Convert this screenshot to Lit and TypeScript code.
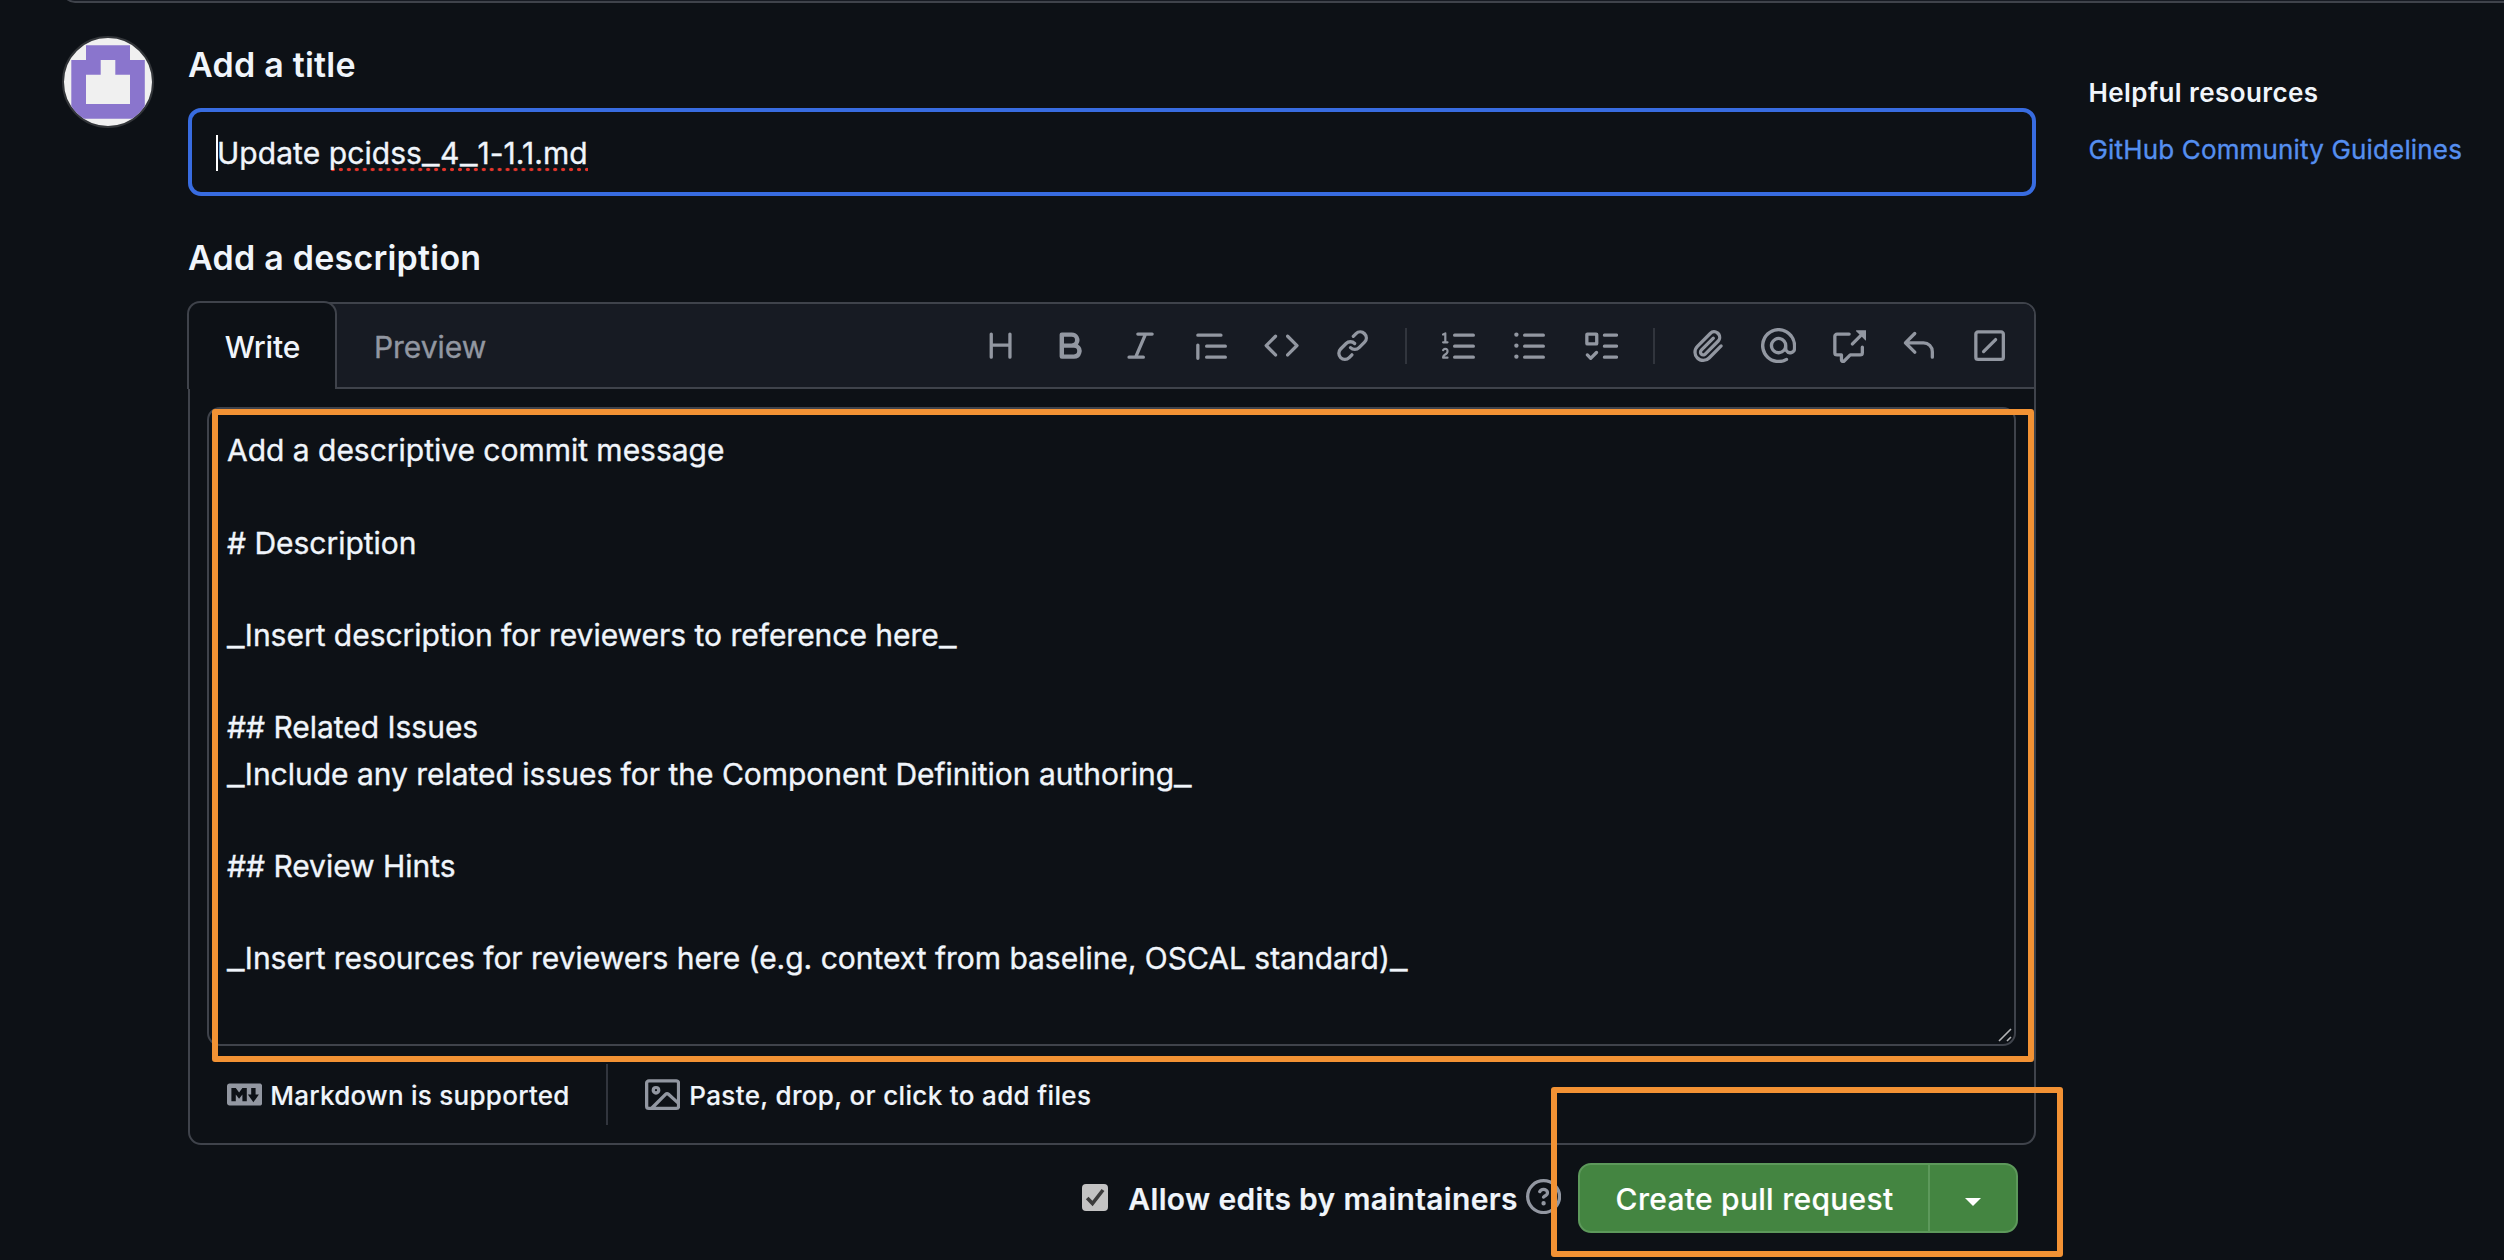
import { LitElement, html, css } from "lit";
import { customElement, property } from "lit/decorators.js";

const ICONS: Record<string, string> = {
  heading:
    "M3.75 2a.75.75 0 0 1 .75.75V7h7V2.75a.75.75 0 0 1 1.5 0v10.5a.75.75 0 0 1-1.5 0V8.5h-7v4.75a.75.75 0 0 1-1.5 0V2.75A.75.75 0 0 1 3.75 2Z",
  bold: "M4 2h4.5a3.501 3.501 0 0 1 2.852 5.53A3.499 3.499 0 0 1 9.5 14H4a1 1 0 0 1-1-1V3a1 1 0 0 1 1-1Zm1 7v3h4.5a1.5 1.5 0 0 0 0-3Zm3.5-2a1.5 1.5 0 0 0 0-3H5v3Z",
  italic:
    "M6 2.75A.75.75 0 0 1 6.75 2h6.5a.75.75 0 0 1 0 1.5h-2.505l-3.858 9H9.25a.75.75 0 0 1 0 1.5h-6.5a.75.75 0 0 1 0-1.5h2.505l3.858-9H6.75A.75.75 0 0 1 6 2.75Z",
  quote:
    "M1.75 2.5h10.5a.75.75 0 0 1 0 1.5H1.75a.75.75 0 0 1 0-1.5Zm4 5h8.5a.75.75 0 0 1 0 1.5h-8.5a.75.75 0 0 1 0-1.5Zm0 5h8.5a.75.75 0 0 1 0 1.5h-8.5a.75.75 0 0 1 0-1.5ZM2.5 7.75v6a.75.75 0 0 1-1.5 0v-6a.75.75 0 0 1 1.5 0Z",
  code: "m11.28 3.22 4.25 4.25a.75.75 0 0 1 0 1.06l-4.25 4.25a.749.749 0 0 1-1.275-.326.749.749 0 0 1 .215-.734L13.94 8l-3.72-3.72a.749.749 0 0 1 .326-1.275.749.749 0 0 1 .734.215Zm-6.56 0a.751.751 0 0 1 1.042.018.751.751 0 0 1 .018 1.042L2.06 8l3.72 3.72a.749.749 0 0 1-.326 1.275.749.749 0 0 1-.734-.215L.47 8.53a.75.75 0 0 1 0-1.06Z",
  link: "m7.775 3.275 1.25-1.25a3.5 3.5 0 1 1 4.95 4.95l-2.5 2.5a3.5 3.5 0 0 1-4.95 0 .751.751 0 0 1 .018-1.042.751.751 0 0 1 1.042-.018 1.998 1.998 0 0 0 2.83 0l2.5-2.5a2.002 2.002 0 0 0-2.83-2.83l-1.25 1.25a.751.751 0 0 1-1.042-.018.751.751 0 0 1-.018-1.042Zm-4.69 9.64a1.998 1.998 0 0 0 2.83 0l1.25-1.25a.751.751 0 0 1 1.042.018.751.751 0 0 1 .018 1.042l-1.25 1.25a3.5 3.5 0 1 1-4.95-4.95l2.5-2.5a3.5 3.5 0 0 1 4.95 0 .751.751 0 0 1-.018 1.042.751.751 0 0 1-1.042.018 1.998 1.998 0 0 0-2.83 0l-2.5 2.5a1.998 1.998 0 0 0 0 2.83Z",
  ordered:
    "M5 3.25a.75.75 0 0 1 .75-.75h8.5a.75.75 0 0 1 0 1.5h-8.5A.75.75 0 0 1 5 3.25Zm0 5a.75.75 0 0 1 .75-.75h8.5a.75.75 0 0 1 0 1.5h-8.5A.75.75 0 0 1 5 8.25Zm0 5a.75.75 0 0 1 .75-.75h8.5a.75.75 0 0 1 0 1.5h-8.5a.75.75 0 0 1-.75-.75ZM.924 10.32a.5.5 0 0 1-.851-.525l.001-.001.001-.002.002-.004.007-.011c.097-.144.215-.273.348-.384.228-.19.588-.392 1.068-.392.468 0 .858.181 1.126.484.259.294.377.673.377 1.038 0 .987-.686 1.495-1.156 1.845l-.047.035c-.303.225-.522.4-.654.597h1.357a.5.5 0 0 1 0 1H.5a.5.5 0 0 1-.5-.5c0-1.005.692-1.52 1.167-1.875l.035-.025c.531-.396.8-.625.8-1.078a.57.57 0 0 0-.128-.376C1.806 10.068 1.695 10 1.5 10a.658.658 0 0 0-.429.163.835.835 0 0 0-.144.153ZM2.003 2.5V6h.503a.5.5 0 0 1 0 1H.5a.5.5 0 0 1 0-1h.503V3.308l-.28.14a.5.5 0 0 1-.446-.895l1.003-.5a.5.5 0 0 1 .723.447Z",
  bullets:
    "M5.75 2.5h8.5a.75.75 0 0 1 0 1.5h-8.5a.75.75 0 0 1 0-1.5Zm0 5h8.5a.75.75 0 0 1 0 1.5h-8.5a.75.75 0 0 1 0-1.5Zm0 5h8.5a.75.75 0 0 1 0 1.5h-8.5a.75.75 0 0 1 0-1.5ZM2 14a1 1 0 1 1 0-2 1 1 0 0 1 0 2Zm1-6a1 1 0 1 1-2 0 1 1 0 0 1 2 0ZM2 4a1 1 0 1 1 0-2 1 1 0 0 1 0 2Z",
  tasks:
    "M2 2h4a1 1 0 0 1 1 1v4a1 1 0 0 1-1 1H2a1 1 0 0 1-1-1V3a1 1 0 0 1 1-1Zm4.655 8.595a.75.75 0 0 1 0 1.06L4.03 14.28a.75.75 0 0 1-1.06 0l-1.5-1.5a.749.749 0 0 1 .326-1.275.749.749 0 0 1 .734.215l.97.97 2.095-2.095a.75.75 0 0 1 1.06 0ZM9.75 2.5h5.5a.75.75 0 0 1 0 1.5h-5.5a.75.75 0 0 1 0-1.5Zm0 5h5.5a.75.75 0 0 1 0 1.5h-5.5a.75.75 0 0 1 0-1.5Zm0 5h5.5a.75.75 0 0 1 0 1.5h-5.5a.75.75 0 0 1 0-1.5Zm-7.25-9v3h3v-3Z",
  paperclip:
    "M12.212 3.02a1.753 1.753 0 0 0-2.478.003l-5.83 5.83a3.007 3.007 0 0 0-.88 2.127c0 .795.315 1.551.88 2.116.567.567 1.333.89 2.126.89.79 0 1.548-.321 2.116-.89l5.48-5.48a.75.75 0 0 1 1.061 1.06l-5.48 5.48a4.492 4.492 0 0 1-3.177 1.33c-1.2 0-2.345-.487-3.187-1.33a4.483 4.483 0 0 1-1.32-3.177c0-1.195.475-2.341 1.32-3.186l5.83-5.83a3.25 3.25 0 0 1 5.553 2.297c0 .863-.343 1.691-.953 2.301L7.439 12.39c-.375.377-.884.59-1.416.593a1.998 1.998 0 0 1-1.412-.593 1.992 1.992 0 0 1 0-2.828l5.48-5.48a.751.751 0 0 1 1.042.018.751.751 0 0 1 .018 1.042l-5.48 5.48a.492.492 0 0 0 0 .707.499.499 0 0 0 .352.154.51.51 0 0 0 .356-.154l5.833-5.827a1.755 1.755 0 0 0 0-2.481Z",
  mention:
    "M4.75 2.37a6.501 6.501 0 0 0 6.5 11.26.75.75 0 0 1 .75 1.298A7.999 7.999 0 0 1 .989 4.148 8 8 0 0 1 16 7.75v1.5a2.75 2.75 0 0 1-5.072 1.475 3.999 3.999 0 0 1-6.65-4.19A4 4 0 0 1 12 8v1.25a1.25 1.25 0 0 0 2.5 0V7.867a6.5 6.5 0 0 0-9.75-5.496ZM10.5 8a2.5 2.5 0 1 0-5 0 2.5 2.5 0 0 0 5 0Z",
  reference:
    "M2.75 3.5a.25.25 0 0 0-.25.25v7.5c0 .138.112.25.25.25h2a.75.75 0 0 1 .75.75v2.19l2.72-2.72a.749.749 0 0 1 .53-.22h4.5a.25.25 0 0 0 .25-.25v-2.5a.75.75 0 0 1 1.5 0v2.5A1.75 1.75 0 0 1 13.25 13H9.06l-2.573 2.573A1.458 1.458 0 0 1 4 14.543V13H2.75A1.75 1.75 0 0 1 1 11.25v-7.5C1 2.784 1.784 2 2.75 2h5.5a.75.75 0 0 1 0 1.5ZM16 1.25v4.146a.25.25 0 0 1-.427.177L14.03 4.03l-3.75 3.75a.749.749 0 0 1-1.275-.326.749.749 0 0 1 .215-.734l3.75-3.75-1.543-1.543A.25.25 0 0 1 11.604 1h4.146a.25.25 0 0 1 .25.25Z",
  reply:
    "M6.78 1.97a.75.75 0 0 1 0 1.06L3.81 6h6.44A4.75 4.75 0 0 1 15 10.75v2.5a.75.75 0 0 1-1.5 0v-2.5a3.25 3.25 0 0 0-3.25-3.25H3.81l2.97 2.97a.749.749 0 0 1-.326 1.275.749.749 0 0 1-.734-.215L1.47 7.28a.75.75 0 0 1 0-1.06l4.25-4.25a.75.75 0 0 1 1.06 0Z",
  slash:
    "M13.25 1c.966 0 1.75.784 1.75 1.75v10.5A1.75 1.75 0 0 1 13.25 15H2.75A1.75 1.75 0 0 1 1 13.25V2.75C1 1.784 1.784 1 2.75 1ZM2.75 2.5a.25.25 0 0 0-.25.25v10.5c0 .138.112.25.25.25h10.5a.25.25 0 0 0 .25-.25V2.75a.25.25 0 0 0-.25-.25Zm8.53 3.28-5.5 5.5a.75.75 0 0 1-1.06-1.06l5.5-5.5a.75.75 0 0 1 1.06 1.06Z",
  markdown:
    "M14.85 3c.63 0 1.15.52 1.14 1.15v7.7c0 .63-.51 1.15-1.15 1.15H1.15C.52 13 0 12.48 0 11.84V4.15C0 3.52.52 3 1.15 3ZM9 11V5H7L5.5 7 4 5H2v6h2V8l1.5 1.92L7 8v3Zm2.99.5L14.5 8H13V5h-2v3H9.5Z",
  image:
    "M16 13.25A1.75 1.75 0 0 1 14.25 15H1.75A1.75 1.75 0 0 1 0 13.25V2.75C0 1.784.784 1 1.75 1h12.5c.966 0 1.75.784 1.75 1.75ZM1.75 2.5a.25.25 0 0 0-.25.25v10.5c0 .138.112.25.25.25h.94l.03-.03 6.077-6.078a1.75 1.75 0 0 1 2.412-.06L14.5 10.31V2.75a.25.25 0 0 0-.25-.25Zm12.5 11a.25.25 0 0 0 .25-.25v-.917l-4.298-3.889a.25.25 0 0 0-.344.009L4.81 13.5ZM7 6a2 2 0 1 1-3.999.001A2 2 0 0 1 7 6ZM5.5 6a.5.5 0 1 0-1 0 .5.5 0 0 0 1 0Z",
  question:
    "M0 8a8 8 0 1 1 16 0A8 8 0 0 1 0 8Zm8-6.5a6.5 6.5 0 1 0 0 13 6.5 6.5 0 0 0 0-13ZM6.92 6.085h.001a.749.749 0 1 1-1.342-.67c.169-.339.436-.701.849-.977C6.845 4.16 7.369 4 8 4a2.756 2.756 0 0 1 1.637.525c.503.377.863.965.863 1.725 0 .448-.115.83-.329 1.15-.205.307-.47.513-.692.662-.109.072-.22.138-.313.195l-.006.004a6.24 6.24 0 0 0-.26.16.952.952 0 0 0-.276.245.75.75 0 0 1-1.248-.832c.184-.264.42-.489.692-.661.103-.067.207-.132.313-.195l.007-.004c.1-.061.182-.11.258-.161a.969.969 0 0 0 .277-.245C8.96 6.514 9 6.427 9 6.25a.612.612 0 0 0-.262-.525A1.27 1.27 0 0 0 8 5.5c-.369 0-.595.09-.74.187a1.01 1.01 0 0 0-.34.398ZM9 11a1 1 0 1 1-2 0 1 1 0 0 1 2 0Z",
};

@customElement("line-icon")
export class LineIcon extends LitElement {
  @property() name = "";

  static styles = css`
    :host {
      display: block;
      flex: none;
      width: 35.2px;
      height: 35.2px;
    }
    .glyph {
      display: block;
      width: 100%;
      height: 100%;
      fill: currentColor;
    }
  `;

  render() {
    return html`<svg class="glyph" viewBox="0 0 16 16"><path fill-rule="evenodd" d=${ICONS[this.name] ?? ""}></path></svg>`;
  }
}

const TOOLBAR: string[][] = [
  ["heading", "bold", "italic", "quote", "code", "link"],
  ["ordered", "bullets", "tasks"],
  ["paperclip", "mention", "reference", "reply", "slash"],
];

const MESSAGE = [
  "Add a descriptive commit message",
  "",
  "# Description",
  "",
  "_Insert description for reviewers to reference here_",
  "",
  "## Related Issues",
  "_Include any related issues for the Component Definition authoring_",
  "",
  "## Review Hints",
  "",
  "_Insert resources for reviewers here (e.g. context from baseline, OSCAL standard)_",
];

@customElement("app-root")
export class AppRoot extends LitElement {
  static styles = css`
    :host {
      --bg: #0d1116;
      --line: #3f434b;
      --fg: #f0f5fb;
      --muted: #9297a1;
      --mark: #f29234;
      display: block;
      position: relative;
      box-sizing: border-box;
      width: 2504px;
      height: 1260px;
      overflow: hidden;
      background: var(--bg);
      color: var(--fg);
      font-family: Inter, "Liberation Sans", sans-serif;
      font-size: 30px;
      -webkit-text-stroke: 0.35px currentColor;
    }
    * {
      box-sizing: border-box;
    }
    .compare-bar {
      height: 3px;
      margin-left: 62px;
      overflow: hidden;
      display: flex;
      align-items: flex-end;
    }
    .compare-edge {
      flex: none;
      width: 2480px;
      height: 30px;
      border: 2px solid var(--line);
      border-radius: 13px;
      background: #171b23;
    }
    .page {
      display: grid;
      grid-template-columns: 92px 1848px 1fr;
      column-gap: 34px;
      padding-left: 62px;
    }
    .avatar {
      width: 92px;
      height: 92px;
      margin-top: 33px;
    }
    .main {
      display: flex;
      flex-direction: column;
      padding-top: 40px;
    }
    .label {
      height: 44px;
      line-height: 44px;
      font-size: 34px;
      font-weight: 600;
      letter-spacing: 0.23px;
      -webkit-text-stroke-width: 0;
    }
    .title-input {
      display: flex;
      align-items: center;
      height: 88px;
      margin: 21px 0 40px;
      padding: 2px 24px 0;
      border: 4px solid #386ce0;
      border-radius: 13px;
      white-space: pre;
    }
    .caret {
      width: 2px;
      height: 36px;
      margin-right: -1px;
      background: #fff;
    }
    .word {
      letter-spacing: 0.05px;
    }
    .misspelt {
      line-height: 38px;
      letter-spacing: 0.08px;
      background: radial-gradient(circle, #e5352b 1.6px, transparent 2.1px) 0 100% / 7.95px 5px repeat-x;
    }
    .underscore {
      display: inline-block;
      transform: scaleX(1.28);
      margin: 0 2.1px;
    }
    .editor {
      margin-top: 22px;
      border: 2px solid var(--line);
      border-radius: 13px;
      height: 843px;
      display: flex;
      flex-direction: column;
    }
    .head {
      display: flex;
      align-items: center;
      height: 85px;
      padding-right: 9.5px;
      background: #171b23;
      border-bottom: 2px solid var(--line);
      border-radius: 11px 11px 0 0;
    }
    .tab {
      height: 88px;
      line-height: 88px;
      margin: -3px 0 -2px -3px;
      width: 150px;
      padding-left: 1px;
      text-align: center;
      font-weight: 500;
      border: 2px solid var(--line);
      border-bottom: 0;
      border-radius: 13px 13px 0 0;
      background: var(--bg);
      letter-spacing: -0.1px;
      -webkit-text-stroke-width: 0;
    }
    .tab.idle {
      width: auto;
      margin-left: 36px;
      border: 0;
      background: none;
      color: var(--muted);
      font-weight: 400;
      line-height: 92px;
      letter-spacing: -0.05px;
      -webkit-text-stroke-width: 0.35px;
    }
    .tools {
      display: flex;
      align-items: center;
      margin-left: auto;
      color: var(--muted);
    }
    .cell {
      display: flex;
      justify-content: center;
      width: 70.4px;
    }
    .divider {
      width: 2px;
      height: 36px;
      margin: 0 17.5px;
      background: #31353d;
    }
    .message {
      height: 639px;
      margin: 18px 18px 0 17px;
      padding: 18.2px 17px 0 18px;
      border: 2px solid var(--line);
      border-radius: 13px;
      line-height: 46.2px;
      white-space: pre;
      display: flex;
      flex-direction: column;
      justify-content: space-between;
    }
    .line {
      height: 46.2px;
      letter-spacing: -0.02px;
    }
    .grip {
      align-self: flex-end;
      width: 14px;
      height: 14px;
      margin: 0 -15px 2px 0;
    }
    .foot {
      display: flex;
      align-items: center;
      height: 97px;
      padding-left: 37px;
      font-size: 26px;
      font-weight: 500;
      letter-spacing: 0.27px;
      -webkit-text-stroke-width: 0.15px;
    }
    .hint {
      display: flex;
      align-items: center;
      gap: 8px;
    }
    .hint span {
      padding-top: 1.5px;
    }
    .hint.files {
      gap: 9px;
      letter-spacing: 0.34px;
    }
    .hint line-icon {
      color: var(--muted);
    }
    .foot-divider {
      width: 2px;
      height: 61px;
      margin: 0 37px 0 36.5px;
      background: #31353d;
    }
    .actions {
      display: flex;
      align-items: center;
      justify-content: flex-end;
      height: 70px;
      margin-top: 18px;
      padding-right: 18px;
      -webkit-text-stroke-width: 0.15px;
    }
    .box {
      width: 26px;
      height: 27px;
      margin: -2px 20px 0 0;
    }
    .allow {
      font-weight: 600;
      letter-spacing: 0.33px;
      margin: 2px 8px 0 0;
    }
    .help {
      color: var(--muted);
      margin: -3px 17px 0 0;
    }
    .split {
      display: flex;
      width: 440px;
      height: 70px;
      border: 2px solid #5d995b;
      border-radius: 13px;
      background: #448541;
      color: #fff;
    }
    .create {
      width: 348px;
      padding-left: 1px;
      line-height: 69px;
      text-align: center;
      font-weight: 500;
      letter-spacing: 0.28px;
    }
    .more {
      flex: 1;
      display: flex;
      align-items: center;
      justify-content: center;
      border-left: 2px solid #5d995b;
    }
    .triangle {
      width: 16px;
      height: 8px;
      margin-top: 8px;
      background: #fff;
      clip-path: polygon(0 0, 100% 0, 50% 100%);
    }
    .side {
      padding: 73px 0 0 18.5px;
      font-size: 26px;
      line-height: 33px;
      white-space: nowrap;
    }
    .side-title {
      font-weight: 600;
      letter-spacing: 0.42px;
      -webkit-text-stroke-width: 0;
    }
    .side-link {
      margin-top: 24px;
      color: #558ff0;
      letter-spacing: 0.16px;
    }
    .mark {
      position: absolute;
      border: 6px solid var(--mark);
      border-radius: 3px;
    }
    .mark.message-mark {
      left: 212px;
      top: 409px;
      width: 1822px;
      height: 653px;
    }
    .mark.create-mark {
      left: 1551px;
      top: 1087px;
      width: 512px;
      height: 170px;
    }
  `;

  private wideUnderscores(text: string) {
    return text
      .split(/(_)/)
      .filter(Boolean)
      .map((part) => (part === "_" ? html`<span class="underscore">_</span>` : part));
  }

  render() {
    return html`
      <div class="compare-bar"><div class="compare-edge"></div></div>
      <div class="page">
        <svg class="avatar" viewBox="0 0 92 92">
          <circle cx="46" cy="46" r="45" fill="#f0f0f0" stroke="#33363a" stroke-width="2"></circle>
          <clipPath id="disc"><circle cx="46" cy="46" r="44"></circle></clipPath>
          <path
            clip-path="url(#disc)"
            fill="#8a75cd"
            d="M24 9.3H68V24H82.8V82.8H9.3V24H24ZM38.7 24V38.7H24V68H68V38.7H53.3V24Z"
            fill-rule="evenodd"
          ></path>
        </svg>
        <div class="main">
          <div class="label">Add a title</div>
          <div class="title-input">
            <span class="caret"></span><span class="word">Update </span><span class="misspelt">${this.wideUnderscores("pcidss_4_1-1.1.md")}</span>
          </div>
          <div class="label">Add a description</div>
          <div class="editor">
            <div class="head">
              <div class="tab">Write</div>
              <div class="tab idle">Preview</div>
              <div class="tools">
                ${TOOLBAR.map(
                  (group, i) => html`${i ? html`<span class="divider"></span>` : ""}${group.map(
                      (name) => html`<span class="cell"><line-icon name=${name}></line-icon></span>`,
                    )}`,
                )}
              </div>
            </div>
            <div class="message">
              <div class="lines">${MESSAGE.map((text) => html`<div class="line">${this.wideUnderscores(text)}</div>`)}</div>
              <svg class="grip" viewBox="0 0 14 14" stroke="#b4b5b7" stroke-width="1.6" fill="none">
                <path d="M1 13 13 1M9 13l4-4"></path>
              </svg>
            </div>
            <div class="foot">
              <div class="hint"><line-icon name="markdown"></line-icon><span>Markdown is supported</span></div>
              <span class="foot-divider"></span>
              <div class="hint files"><line-icon name="image"></line-icon><span>Paste, drop, or click to add files</span></div>
            </div>
          </div>
          <div class="actions">
            <svg class="box" viewBox="0 0 26 27">
              <rect width="26" height="27" rx="4" fill="#c3c3c3"></rect>
              <path d="m5.2 14 5.3 5.6L21 6" fill="none" stroke="#3b3b3b" stroke-width="3.6"></path>
            </svg>
            <span class="allow">Allow edits by maintainers</span>
            <line-icon class="help" name="question"></line-icon>
            <div class="split">
              <div class="create">Create pull request</div>
              <div class="more"><span class="triangle"></span></div>
            </div>
          </div>
        </div>
        <div class="side">
          <div class="side-title">Helpful resources</div>
          <div class="side-link">GitHub Community Guidelines</div>
        </div>
      </div>
      <div class="mark message-mark"></div>
      <div class="mark create-mark"></div>
    `;
  }
}
